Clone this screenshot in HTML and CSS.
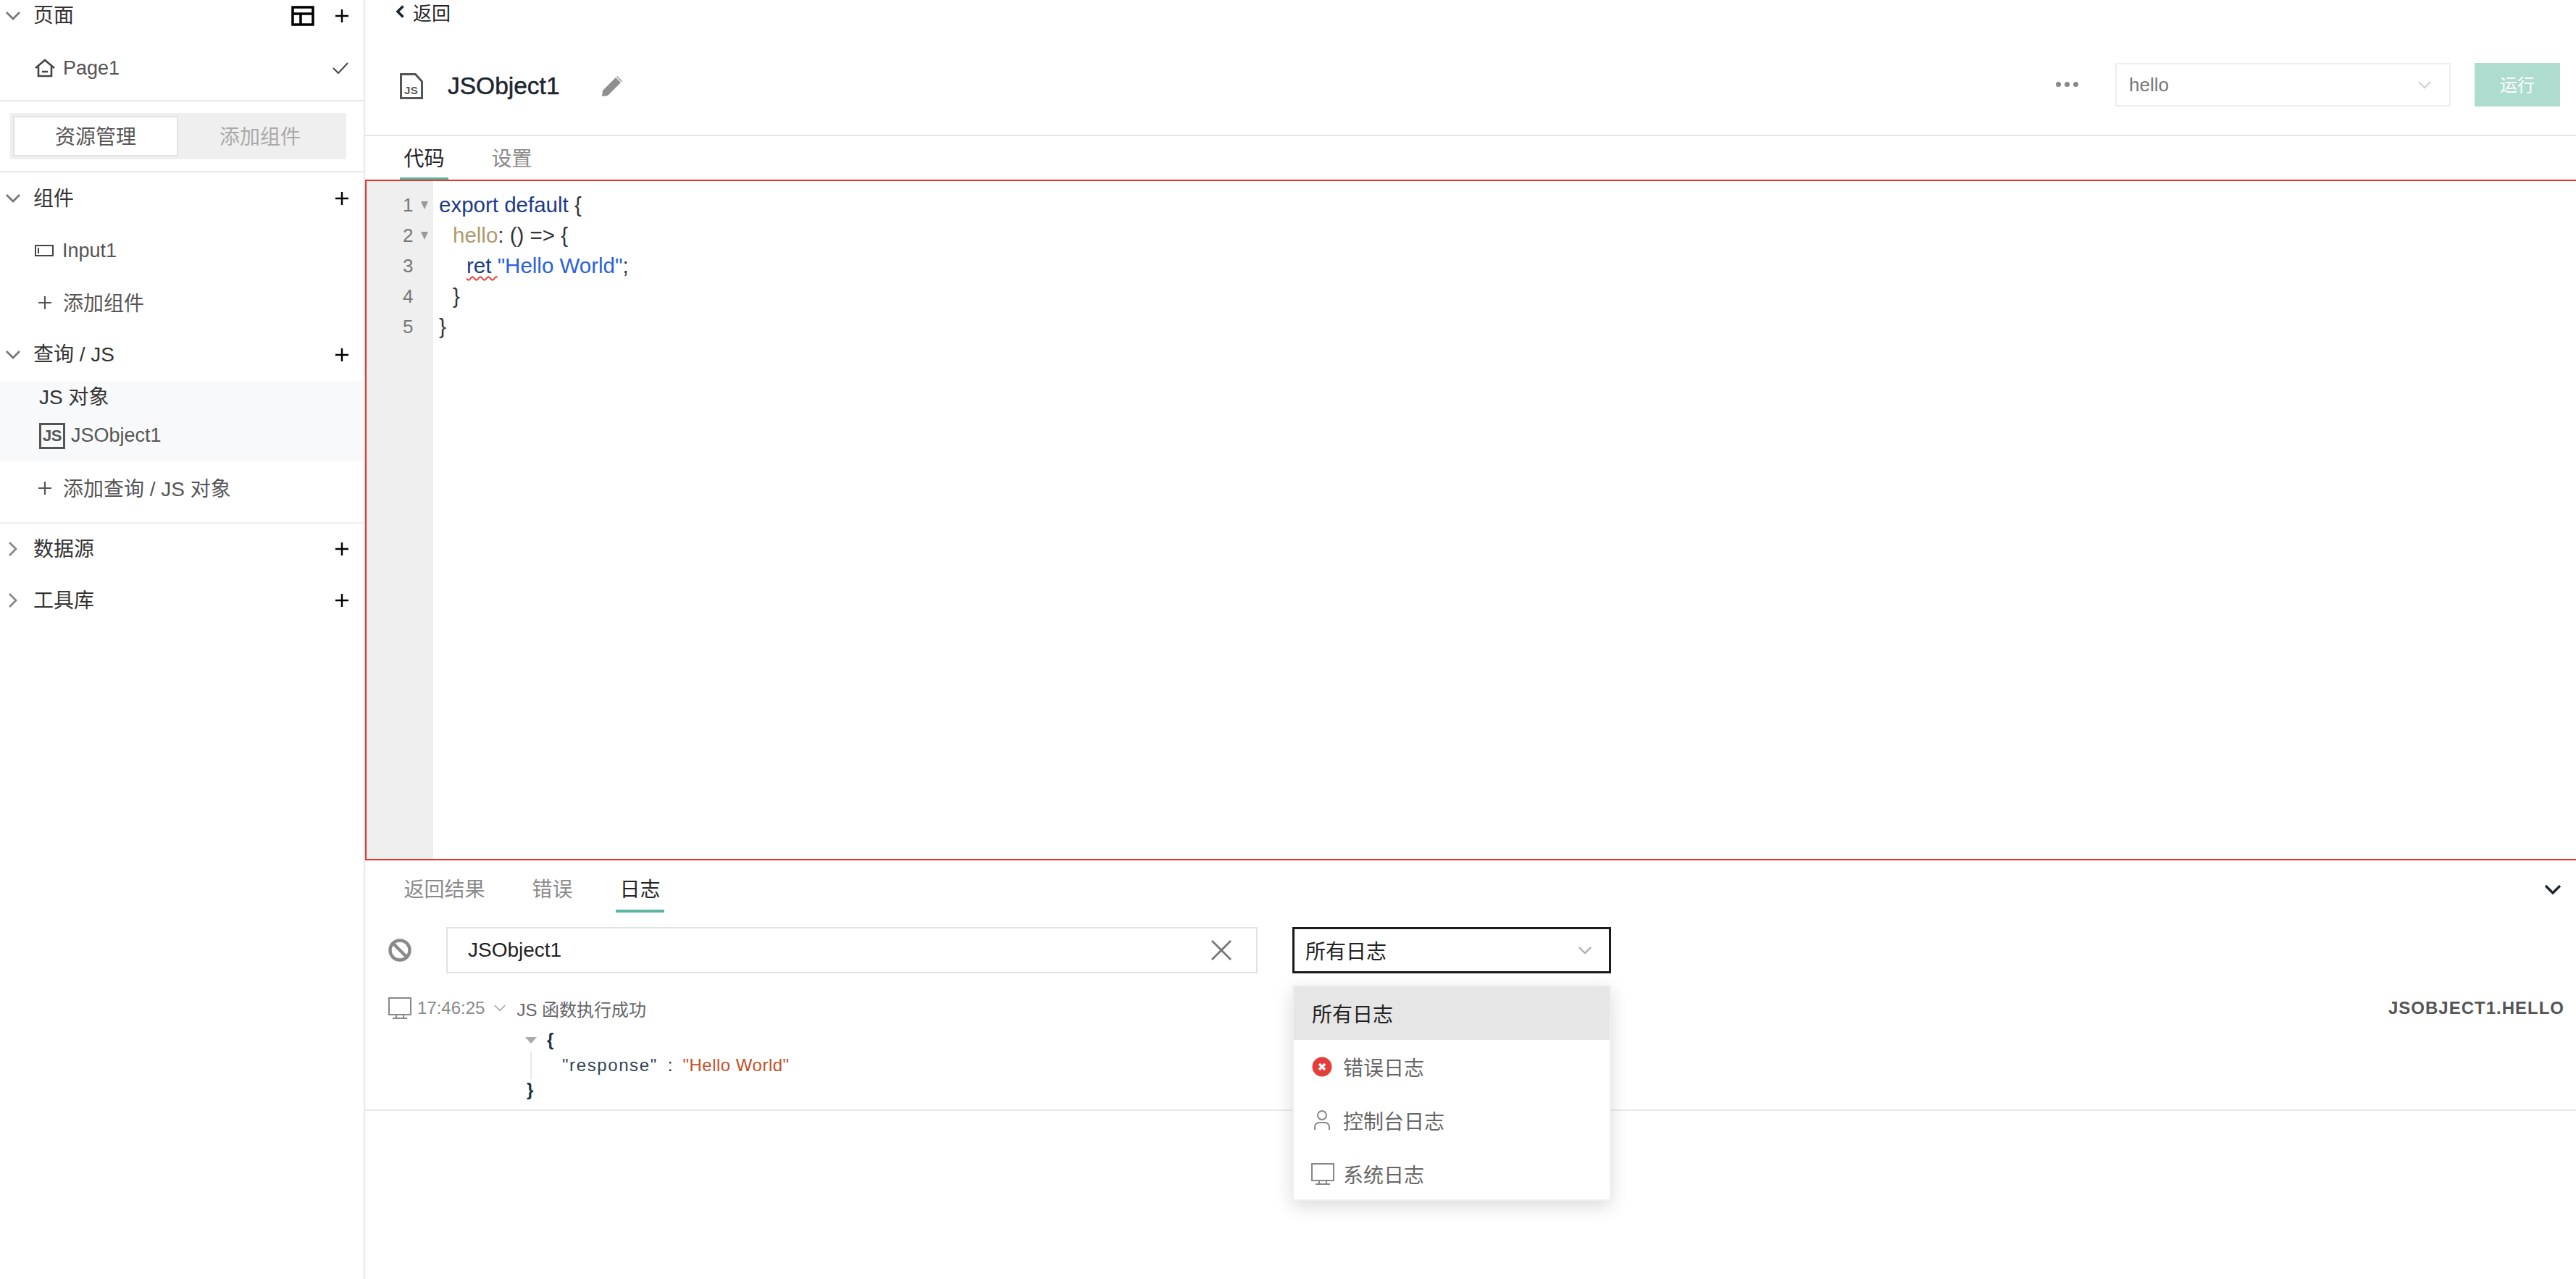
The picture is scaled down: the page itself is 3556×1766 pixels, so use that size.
FILE: index.html
```html
<!DOCTYPE html>
<html lang="zh">
<head>
<meta charset="utf-8">
<title>JSObject1</title>
<link rel="stylesheet" href="styles.css">
</head>
<body>
<aside class="sidebar">
  <div class="head head-first">
    <svg class="chev" viewBox="0 0 20 12"><path d="M1 1l9 9 9-9"/></svg>
    <span class="head-title">页面</span>
    <svg class="layout-ico" viewBox="0 0 32 28"><path d="M2 2h28v24H2zM2 11h28M13 11v15"/></svg>
    <svg class="plus" viewBox="0 0 18 18"><path d="M9 0v18M0 9h18"/></svg>
  </div>
  <div class="row row-page">
    <svg class="row-ico" viewBox="0 0 28 26"><path d="M1 13L14 2l13 11M5 11v13h18V11M10 18h8"/></svg>
    <span>Page1</span>
    <svg class="check" viewBox="0 0 22 16"><path d="M1 8l7 7L21 1"/></svg>
  </div>
  <div class="segment-wrap">
    <div class="segment">
      <div class="seg seg-on">资源管理</div>
      <div class="seg">添加组件</div>
    </div>
  </div>
  <div class="head head-low">
    <svg class="chev" viewBox="0 0 20 12"><path d="M1 1l9 9 9-9"/></svg>
    <span class="head-title">组件</span>
    <svg class="plus" viewBox="0 0 18 18"><path d="M9 0v18M0 9h18"/></svg>
  </div>
  <div class="row">
    <svg class="row-ico input-ico" viewBox="0 0 26 16"><path d="M1 1h24v14H1zM5 4v8"/></svg>
    <span>Input1</span>
  </div>
  <div class="row row-add">
    <svg class="add-plus" viewBox="0 0 18 18"><path d="M9 0v18M0 9h18"/></svg>
    <span>添加组件</span>
  </div>
  <div class="head">
    <svg class="chev" viewBox="0 0 20 12"><path d="M1 1l9 9 9-9"/></svg>
    <span class="head-title">查询 / JS</span>
    <svg class="plus" viewBox="0 0 18 18"><path d="M9 0v18M0 9h18"/></svg>
  </div>
  <div class="group">
    <div class="group-title">JS 对象</div>
    <div class="group-row">
      <span class="js-badge">JS</span>
      <span>JSObject1</span>
    </div>
  </div>
  <div class="row row-add row-add-last">
    <svg class="add-plus" viewBox="0 0 18 18"><path d="M9 0v18M0 9h18"/></svg>
    <span>添加查询 / JS 对象</span>
  </div>
  <div class="head head-low">
    <svg class="chev-r" viewBox="0 0 12 20"><path d="M1 1l9 9-9 9"/></svg>
    <span class="head-title">数据源</span>
    <svg class="plus" viewBox="0 0 18 18"><path d="M9 0v18M0 9h18"/></svg>
  </div>
  <div class="head head-low">
    <svg class="chev-r" viewBox="0 0 12 20"><path d="M1 1l9 9-9 9"/></svg>
    <span class="head-title">工具库</span>
    <svg class="plus" viewBox="0 0 18 18"><path d="M9 0v18M0 9h18"/></svg>
  </div>
</aside>

<main class="main">
  <div class="back">
    <svg class="back-ico" viewBox="0 0 12 18"><path d="M10.5 1.5L3 9l7.5 7.5"/></svg>
    <span>返回</span>
  </div>
  <header class="title-bar">
    <svg class="file-ico" viewBox="0 0 32 36"><path class="file-line" d="M1.5 34.5v-33h20l9 10v23z"/><text class="file-text" x="6" y="29">JS</text></svg>
    <h1 class="title">JSObject1</h1>
    <svg class="pencil" viewBox="0 0 28 28"><path d="M0 28l1-8L19 2l7 7L8 27zM21 0l7 7-1 1-7-7z"/></svg>
    <div class="spacer"></div>
    <div class="dots"><i></i><i></i><i></i></div>
    <div class="fn-select">
      <span>hello</span>
      <svg class="fn-chev" viewBox="0 0 20 12"><path d="M1 1l9 9 9-9"/></svg>
    </div>
    <button class="run">运行</button>
  </header>
  <nav class="tabs">
    <div class="tab tab-on">代码</div>
    <div class="tab">设置</div>
  </nav>
  <section class="editor">
    <div class="gutter">
      <div class="ln">1<i class="fold"></i></div>
      <div class="ln">2<i class="fold"></i></div>
      <div class="ln">3</div>
      <div class="ln">4</div>
      <div class="ln">5</div>
    </div>
    <div class="code">
      <div class="cl"><span class="kw">export default</span> {</div>
      <div class="cl in1"><span class="prop">hello</span>: () =&gt; {</div>
      <div class="cl in2"><span class="err">ret </span><span class="str">"Hello World"</span>;</div>
      <div class="cl in1">}</div>
      <div class="cl">}</div>
    </div>
  </section>
  <section class="panel">
    <div class="panel-tabs">
      <div class="tab">返回结果</div>
      <div class="tab">错误</div>
      <div class="tab tab-on">日志</div>
      <svg class="collapse" viewBox="0 0 24 14"><path d="M2 2l10 10L22 2"/></svg>
    </div>
    <div class="filter">
      <svg class="block-ico" viewBox="0 0 32 32"><circle cx="16" cy="16" r="13.5"/><path d="M6.5 6.5l19 19"/></svg>
      <div class="search">
        <span>JSObject1</span>
        <svg class="x-ico" viewBox="0 0 28 28"><path d="M1 1l26 26M27 1L1 27"/></svg>
      </div>
      <div class="log-select">
        <span>所有日志</span>
        <svg class="log-chev" viewBox="0 0 20 12"><path d="M1 1l9 9 9-9"/></svg>
        <div class="menu">
          <div class="menu-item menu-item-on">所有日志</div>
          <div class="menu-item">
            <svg class="mi-ico" viewBox="0 0 28 28"><circle class="err-c" cx="14" cy="14" r="13.5"/><path class="err-x" d="M10 10l8 8M18 10l-8 8"/></svg>
            <span>错误日志</span>
          </div>
          <div class="menu-item">
            <svg class="mi-ico" viewBox="0 0 28 28"><circle class="line-ico" cx="14" cy="7" r="6"/><path class="line-ico" d="M4 27v-4a6 6 0 0 1 6-6h8a6 6 0 0 1 6 6v4"/></svg>
            <span>控制台日志</span>
          </div>
          <div class="menu-item">
            <svg class="mi-ico mi-mon" viewBox="0 0 32 30"><path class="line-ico" d="M1 1h30v23H1zM11 24v5M21 24v5M6 29h20"/></svg>
            <span>系统日志</span>
          </div>
        </div>
      </div>
    </div>
    <div class="log">
      <div class="log-head">
        <svg class="log-mon" viewBox="0 0 32 30"><path class="line-ico" d="M1 1h30v23H1zM11 24v5M21 24v5M6 29h20"/></svg>
        <span class="log-time">17:46:25</span>
        <svg class="log-arrow" viewBox="0 0 20 12"><path d="M1 1l9 9 9-9"/></svg>
        <span class="log-msg">JS 函数执行成功</span>
        <span class="log-src">JSOBJECT1.HELLO</span>
      </div>
      <div class="json">
        <div class="json-open"><i class="json-tri"></i><b>{</b></div>
        <div class="json-body"><span class="json-key">"response"</span><span class="json-sep">:</span><span class="json-val">"Hello World"</span></div>
        <div class="json-close"><b>}</b></div>
      </div>
    </div>
  </section>
</main>
</body>
</html>
```
FILE: styles.css
```css
* { box-sizing: border-box; }
html, body { margin: 0; height: 1766px; overflow: hidden; }
body {
  display: flex;
  background: #fff;
  font-family: "Liberation Sans", "Noto Sans CJK SC", sans-serif;
  color: #333;
}
svg { display: block; flex: none; fill: none; }

/* sidebar */
.sidebar { width: 504px; flex: none; border-right: 2px solid #e8e8e8; height: 100%; }
.head { height: 72px; display: flex; align-items: center; padding-right: 21px; font-size: 28px; color: #333; }
.head-first { height: 44px; }
.head-low .head-title { padding-top: 2px; }
.chev { width: 20px; height: 12px; margin-left: 8px; stroke: #777; stroke-width: 2.8; }
.chev-r { width: 12px; height: 20px; margin-left: 12px; margin-right: 4px; stroke: #888; stroke-width: 2.8; }
.head-title { margin-left: 18px; flex: 1; line-height: 1; }
.chev-r + .head-title { margin-left: 18px; }
.layout-ico { width: 32px; height: 28px; margin-right: 29px; stroke: #000; stroke-width: 3.5; }
.plus { width: 18px; height: 18px; stroke: #000; stroke-width: 2.4; }
.row { height: 72px; display: flex; align-items: center; padding-left: 48px; padding-right: 21px; font-size: 27px; color: #555; }
.row-page { margin-top: 14px; margin-bottom: 8px; }
.row-page span { flex: 1; }
.row-ico { width: 28px; height: 26px; margin-right: 11px; stroke: #444; stroke-width: 2.6; }
.input-ico { height: 16px; width: 26px; margin-right: 12px; stroke-width: 2; }
.check { width: 22px; height: 16px; stroke: #444; stroke-width: 2; }
.segment-wrap { border-top: 2px solid #e8e8ec; border-bottom: 2px solid #e8e8ec; padding: 16px 24px 16px 14px; height: 100px; }
.segment { height: 64px; background: #efefef; padding: 4px; display: flex; font-size: 28px; color: #aaa; }
.seg { flex: 1; display: flex; align-items: center; justify-content: center; padding-bottom: 2px; }
.seg-on { flex: none; width: 228px; background: #fff; border: 2px solid #e2e2e2; color: #555; }
.seg:not(.seg-on) { padding-right: 2px; }
.row-add { padding-left: 53px; font-size: 28px; }
.row-add span { margin-top: -2px; }
.row-add-last { height: 74px; margin-bottom: 10px; }
.add-plus { width: 18px; height: 18px; margin-right: 16px; stroke: #555; stroke-width: 2.2; }
.group { background: #f8f9fa; height: 111px; padding-left: 54px; }
.group-title { height: 40px; display: flex; align-items: center; font-size: 28px; color: #333; }
.group-row { height: 71px; display: flex; align-items: center; font-size: 27px; color: #555; }
.js-badge { width: 36px; height: 36px; border: 3px solid #555; display: flex; align-items: center; justify-content: center; font-size: 22px; font-weight: 700; margin-right: 8px; letter-spacing: -0.5px; }
.row-add-last + .head { border-top: 2px solid #eee; }

/* main */
.main { flex: 1; min-width: 0; height: 100%; display: flex; flex-direction: column; }
.back { height: 32px; display: flex; align-items: center; padding-left: 42px; font-size: 26px; color: #222; }
.back-ico { width: 12px; height: 18px; margin-right: 12px; stroke: #1c2530; stroke-width: 3.6; }
.title-bar { height: 156px; padding-top: 20px; padding-right: 22px; border-bottom: 2px solid #e6e6e6; display: flex; align-items: center; padding-left: 48px; }
.file-ico { width: 32px; height: 36px; }
.file-line { stroke: #555; stroke-width: 3; }
.file-text { font-size: 15px; font-weight: 700; fill: #555; letter-spacing: 0.5px; }
.title { margin: 0 0 0 34px; font-size: 33.5px; font-weight: 400; color: #1c2530; line-height: 1; -webkit-text-stroke: 0.5px #1c2530; }
.pencil { width: 28px; height: 28px; margin-left: 58px; fill: #8f8f8f; }
.spacer { flex: 1; }
.dots { display: flex; gap: 5px; margin-right: 51px; margin-top: -6px; }
.dots i { width: 7px; height: 7px; border-radius: 50%; background: #888; }
.fn-select { width: 463px; height: 60px; margin-top: -4px; border: 2px solid #eee; display: flex; align-items: center; justify-content: space-between; padding: 0 25px 0 17px; font-size: 26px; color: #777; }
.fn-chev { width: 18px; height: 11px; stroke: #d2d2d2; stroke-width: 2.4; }
.run { width: 118px; height: 60px; margin-top: -4px; margin-left: 33px; background: #aedccf; border: 0; color: #fff; font: inherit; font-size: 24px; padding: 0 0 3px; }
.tabs { height: 60px; display: flex; gap: 54px; padding-left: 48px; }
.tab { padding: 0 5.5px 0; height: 100%; display: flex; align-items: center; font-size: 28px; color: #8a8a8a; border-bottom: 3px solid transparent; }
.tab-on { color: #222; border-bottom-color: #5bb5a0; }

/* editor */
.editor { height: 940px; border: 2px solid #e9352b; border-right: 0; display: flex; }
.gutter { width: 92px; background: #efefef; padding-top: 12px; }
.ln { height: 42px; display: flex; align-items: center; padding-left: 50px; font-size: 26px; color: #777; position: relative; }
.fold { width: 0; height: 0; margin-left: 11px; border-left: 5.5px solid transparent; border-right: 5.5px solid transparent; border-top: 11px solid #999; }
.code { flex: 1; padding: 12px 0 0 8px; font-size: 29.5px; color: #333; }
.cl { height: 42px; line-height: 42px; white-space: pre; }
.in1 { padding-left: 19px; }
.in2 { padding-left: 38px; }
.kw { color: #1c3a87; }
.prop { color: #b09a6b; }
.err { color: #1c3a87; text-decoration: underline wavy #e9352b 1.5px; text-underline-offset: 4px; }
.str { color: #2962d9; }

/* bottom panel */
.panel { flex: 1; min-height: 0; display: flex; flex-direction: column; }
.panel-tabs { height: 72px; display: flex; gap: 54px; padding-left: 48px; padding-right: 20px; position: relative; align-items: stretch; }
.panel-tabs .tab { border-bottom-width: 4px; height: 72px; padding-top: 8px; }
.collapse { width: 24px; height: 14px; margin-left: auto; align-self: center; margin-top: 8px; stroke: #1c2530; stroke-width: 3.4; }
.filter { height: 64px; margin-top: 20px; display: flex; align-items: center; padding-left: 32px; }
.block-ico { width: 32px; height: 32px; margin-right: 48px; stroke: #8a8a8a; stroke-width: 4.5; }
.search { width: 1120px; height: 64px; border: 2px solid #e2e2e2; display: flex; align-items: center; justify-content: space-between; padding: 0 34px 0 28px; font-size: 28px; color: #222; }
.x-ico { width: 28px; height: 28px; stroke: #777; stroke-width: 2.8; }
.log-select { width: 440px; height: 64px; margin-left: 48px; border: 3px solid #1a1a1a; display: flex; align-items: center; justify-content: space-between; padding: 0 24px 0 15px; font-size: 28px; color: #222; position: relative; }
.log-chev { width: 18px; height: 11px; stroke: #aaa; stroke-width: 2.4; }
.menu { position: absolute; left: -3px; top: 77px; width: 440px; height: 298px; background: #fff; border: 2px solid #f0f0f0; box-shadow: 0 8px 24px rgba(0, 0, 0, 0.14); z-index: 5; }
.menu-item { height: 74px; display: flex; align-items: center; padding-left: 25px; font-size: 28px; color: #666; }
.menu-item-on { background: #e6e6e6; color: #222; }
.mi-ico { width: 28px; height: 28px; margin-right: 15px; }
.mi-mon { width: 32px; height: 30px; margin-left: -1px; margin-right: 12px; }
.err-c { fill: #e53e3a; }
.err-x { stroke: #fff; stroke-width: 3.2; }
.line-ico { stroke: #888; stroke-width: 2; }

.log { margin-top: 28px; border-bottom: 2px solid #e8e8e8; height: 162px; padding-left: 32px; padding-right: 16px; }
.log-head { height: 40px; display: flex; align-items: center; }
.log-mon { width: 32px; height: 30px; margin-right: 8px; }
.log-time { font-size: 24px; color: #8a8a8a; }
.log-arrow { width: 16px; height: 10px; margin: 0 15px 0 13px; stroke: #aaa; stroke-width: 2.2; }
.log-msg { font-size: 24px; color: #666; flex: 1; }
.log-src { font-size: 24px; font-weight: 700; color: #555; letter-spacing: 1px; }
.json { margin-left: 186px; margin-top: 8px; font-size: 24px; color: #1c3340; }
.json-open { height: 32px; display: flex; align-items: center; position: relative; }
.json-tri { width: 0; height: 0; margin-left: 3px; border-left: 8px solid transparent; border-right: 8px solid transparent; border-top: 9px solid #aaa; margin-right: 14px; }
.json-open b, .json-close b { font-weight: 700; }
.json-body { margin-left: 10px; padding-left: 42px; border-left: 2px solid #e8e8e8; height: 38px; display: flex; align-items: center; font-size: 24px; }
.json-key { letter-spacing: 1.6px; color: #2d4656; }
.json-sep { margin: 0 14px; }
.json-val { color: #c4512a; letter-spacing: 0.5px; }
.json-close { height: 30px; display: flex; align-items: center; padding-left: 5px; }
```
